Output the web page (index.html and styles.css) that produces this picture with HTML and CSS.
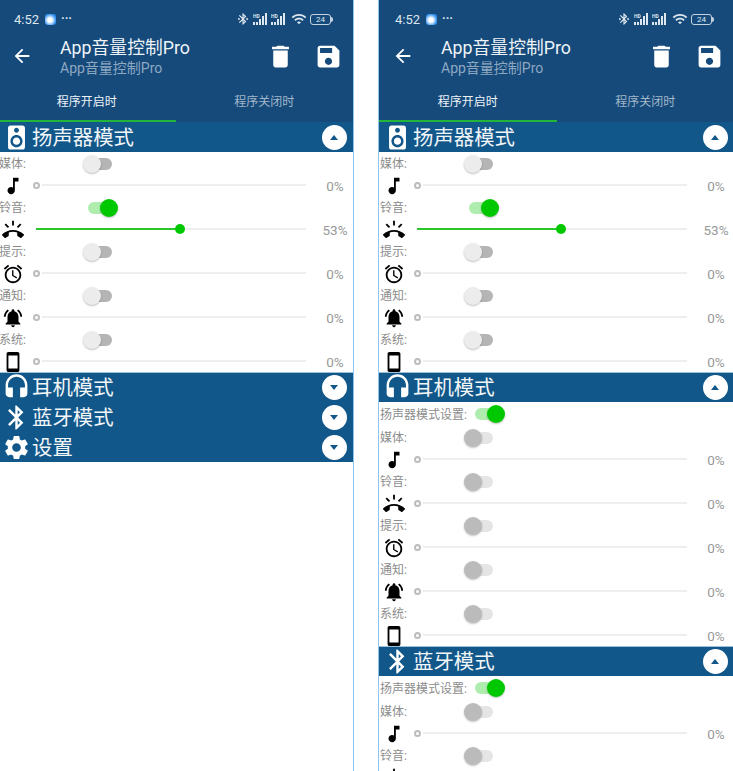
FILE: index.html
```html
<!DOCTYPE html>
<html lang="zh-CN">
<head>
    <meta charset="UTF-8">
    <meta name="viewport" content="width=device-width, initial-scale=1.0">
    <title>App音量控制Pro</title>
    <link rel="stylesheet" href="styles.css">
</head>
<body>
    <svg class="sprites" xmlns="http://www.w3.org/2000/svg">
        <symbol id="i-back" viewBox="0 0 24 24"><path d="M20 11H7.83l5.59-5.59L12 4l-8 8 8 8 1.41-1.41L7.83 13H20v-2z"/></symbol>
        <symbol id="i-delete" viewBox="0 0 24 24"><path d="M6 19c0 1.1.9 2 2 2h8c1.1 0 2-.9 2-2V7H6v12zM19 4h-3.5l-1-1h-5l-1 1H5v2h14V4z"/></symbol>
        <symbol id="i-save" viewBox="0 0 24 24"><path d="M17 3H5c-1.11 0-2 .9-2 2v14c0 1.1.89 2 2 2h14c1.1 0 2-.9 2-2V7l-4-4zm-5 16c-1.66 0-3-1.34-3-3s1.34-3 3-3 3 1.34 3 3-1.34 3-3 3zm3-10H5V5h10v4z"/></symbol>
        <symbol id="i-note" viewBox="0 0 24 24"><path d="M12 3v10.55c-.59-.34-1.27-.55-2-.55-2.21 0-4 1.79-4 4s1.79 4 4 4 4-1.79 4-4V7h4V3h-6z"/></symbol>
        <symbol id="i-ring" viewBox="0 0 24 24"><path d="M23.71 16.67C20.66 13.78 16.54 12 12 12 7.46 12 3.34 13.78.29 16.67c-.18.18-.29.43-.29.71 0 .28.11.53.29.71l2.48 2.48c.18.18.43.29.71.29.27 0 .52-.11.7-.28.79-.74 1.69-1.36 2.66-1.85.33-.16.56-.5.56-.9v-3.1c1.45-.48 3-.73 4.6-.73s3.15.25 4.6.72v3.1c0 .39.23.74.56.9.98.49 1.87 1.12 2.66 1.85.18.18.43.28.7.28.28 0 .53-.11.71-.29l2.48-2.48c.18-.18.29-.43.29-.71 0-.27-.11-.52-.29-.7zM21.16 6.26l-1.41-1.41-3.56 3.55 1.41 1.41s3.45-3.52 3.56-3.55zM13 2h-2v5h2V2zM6.4 9.81L7.81 8.4 4.26 4.84 2.84 6.26c.11.03 3.56 3.55 3.56 3.55z"/></symbol>
        <symbol id="i-alarm" viewBox="0 0 24 24"><path d="M22 5.72l-4.6-3.86-1.29 1.53 4.6 3.86L22 5.72zM7.88 3.39L6.6 1.86 2 5.71l1.29 1.53 4.59-3.85zM12.5 8H11v6l4.75 2.85.75-1.23-4-2.37V8zM12 4c-4.97 0-9 4.03-9 9s4.02 9 9 9c4.97 0 9-4.03 9-9s-4.03-9-9-9zm0 16c-3.87 0-7-3.13-7-7s3.13-7 7-7 7 3.13 7 7-3.13 7-7 7z"/></symbol>
        <symbol id="i-bell" viewBox="0 0 24 24"><path d="M7.58 4.08L6.15 2.65C3.75 4.48 2.17 7.3 2.03 10.5h2c.15-2.65 1.51-4.97 3.55-6.42zm12.39 6.42h2c-.15-3.2-1.73-6.02-4.12-7.85l-1.42 1.43c2.02 1.45 3.39 3.77 3.54 6.42zM18 11c0-3.07-1.64-5.64-4.5-6.32V4c0-.83-.67-1.5-1.5-1.5s-1.5.67-1.5 1.5v.68C7.63 5.36 6 7.92 6 11v5l-2 2v1h16v-1l-2-2v-5zm-6 11c.14 0 .27-.01.4-.04.65-.14 1.18-.58 1.44-1.18.1-.24.15-.5.15-.78h-4c.01 1.1.9 2 2.01 2z"/></symbol>
        <symbol id="i-phone" viewBox="0 0 24 24"><path d="M17 1.01L7 1c-1.1 0-2 .9-2 2v18c0 1.1.9 2 2 2h10c1.1 0 2-.9 2-2V3c0-1.1-.9-1.99-2-1.99zM17 19H7V5h10v14z"/></symbol>
        <symbol id="i-speaker" viewBox="0 0 24 24"><path d="M17 2H7c-1.1 0-2 .9-2 2v16c0 1.1.9 1.99 2 1.99L17 22c1.1 0 2-.9 2-2V4c0-1.1-.9-2-2-2zm-5 2c1.1 0 2 .9 2 2s-.9 2-2 2c-1.11 0-2-.9-2-2s.89-2 2-2zm0 16c-2.76 0-5-2.24-5-5s2.24-5 5-5 5 2.24 5 5-2.24 5-5 5zm0-8c-1.66 0-3 1.34-3 3s1.34 3 3 3 3-1.34 3-3-1.34-3-3-3z"/></symbol>
        <symbol id="i-headset" viewBox="0 0 24 24"><path d="M12 1c-4.97 0-9 4.03-9 9v7c0 1.66 1.34 3 3 3h3v-8H5v-2c0-3.87 3.13-7 7-7s7 3.13 7 7v2h-4v8h3c1.66 0 3-1.34 3-3v-7c0-4.97-4.03-9-9-9z"/></symbol>
        <symbol id="i-bluetooth" viewBox="0 0 24 24"><path d="M17.71 7.71L12 2h-1v7.59L6.41 5 5 6.41 10.59 12 5 17.59 6.41 19 11 14.41V22h1l5.71-5.71-4.3-4.29 4.3-4.29zM13 5.83l1.88 1.88L13 9.59V5.83zm1.88 10.46L13 18.17v-3.76l1.88 1.88z"/></symbol>
        <symbol id="i-bt-connected" viewBox="0 0 24 24"><path d="M7 12l-2-2-2 2 2 2 2-2zm10.710-4.290L12 2h-1v7.590L6.410 5 5 6.410 10.590 12 5 17.590 6.410 19 11 14.410V22h1l5.710-5.710-4.300-4.290 4.300-4.290zM13 5.830l1.880 1.880L13 9.590V5.830zm1.880 10.460L13 18.170v-3.760l1.880 1.880zM19 10l-2 2 2 2 2-2-2-2z"/></symbol>
        <symbol id="i-settings" viewBox="0 0 24 24"><path d="M19.14 12.94c.04-.3.06-.61.06-.94 0-.32-.02-.64-.07-.94l2.03-1.58c.18-.14.23-.41.12-.61l-1.92-3.32c-.12-.22-.37-.29-.59-.22l-2.39.96c-.5-.38-1.03-.7-1.62-.94l-.36-2.54c-.04-.24-.24-.41-.48-.41h-3.84c-.24 0-.43.17-.47.41l-.36 2.54c-.59.24-1.13.57-1.62.94l-2.39-.96c-.22-.08-.47 0-.59.22L2.74 8.87c-.12.21-.08.47.12.61l2.03 1.58c-.05.3-.09.63-.09.94s.02.64.07.94l-2.03 1.58c-.18.14-.23.41-.12.61l1.92 3.32c.12.22.37.29.59.22l2.39-.96c.5.38 1.03.7 1.62.94l.36 2.54c.05.24.24.41.48.41h3.84c.24 0 .44-.17.47-.41l.36-2.54c.59-.24 1.13-.56 1.62-.94l2.39.96c.22.08.47 0 .59-.22l1.92-3.32c.12-.22.07-.47-.12-.61l-2.01-1.58zM12 15.6c-1.98 0-3.6-1.62-3.6-3.6s1.62-3.6 3.6-3.6 3.6 1.62 3.6 3.6-1.62 3.6-3.6 3.6z"/></symbol>
        <symbol id="i-wifi" viewBox="0 0 24 24"><path d="M1 9l2 2c5-5 13-5 18 0l2-2C17 3 7 3 1 9zm4 4l2 2c2.8-2.8 7.2-2.8 10 0l2-2c-3.9-3.9-10.100-3.900-14 0zm4 4l3 3 3-3c-1.700-1.600-4.300-1.600-6 0z"/></symbol>
        <symbol id="i-signal" viewBox="0 0 16 12">
            <rect x="0" y="9" width="2" height="3"/><rect x="3" y="9" width="2" height="3"/><rect x="6" y="6" width="2" height="6"/>
            <rect x="9" y="3" width="2" height="9"/><rect x="12" y="0" width="2" height="12"/>
            <text x="0" y="5" class="hd">HD</text>
        </symbol>
    </svg>

    <div class="phone first">
        <div class="topbar">
            <div class="status">
                <span class="time">4:52</span>
                <span class="app-dot"></span>
                <span class="more">···</span>
                <div class="status-icons">
                    <svg class="st-bt"><use href="#i-bt-connected"/></svg>
                    <svg class="st-signal"><use href="#i-signal"/></svg>
                    <svg class="st-signal"><use href="#i-signal"/></svg>
                    <svg class="st-wifi"><use href="#i-wifi"/></svg>
                    <span class="battery">24</span>
                </div>
            </div>
            <div class="toolbar">
                <svg class="tool-back"><use href="#i-back"/></svg>
                <div class="titles">
                    <div class="title">App音量控制Pro</div>
                    <div class="subtitle">App音量控制Pro</div>
                </div>
                <svg class="tool-btn"><use href="#i-delete"/></svg>
                <svg class="tool-btn"><use href="#i-save"/></svg>
            </div>
            <div class="tabs">
                <div class="tab active">程序开启时</div>
                <div class="tab">程序关闭时</div>
            </div>
        </div>

        <div class="section-head">
            <svg class="head-icon"><use href="#i-speaker"/></svg>
            <span>扬声器模式</span>
            <span class="chevron up"></span>
        </div>
        <div class="row"><label>媒体:</label><span class="switch off"></span></div>
        <div class="row"><svg class="row-icon"><use href="#i-note"/></svg><div class="slider"><i class="ring"></i></div><span class="pct">0%</span></div>
        <div class="row"><label>铃音:</label><span class="switch on"></span></div>
        <div class="row"><svg class="row-icon"><use href="#i-ring"/></svg><div class="slider"><b class="fill" style="width: 53%"></b></div><span class="pct">53%</span></div>
        <div class="row"><label>提示:</label><span class="switch off"></span></div>
        <div class="row"><svg class="row-icon"><use href="#i-alarm"/></svg><div class="slider"><i class="ring"></i></div><span class="pct">0%</span></div>
        <div class="row"><label>通知:</label><span class="switch off"></span></div>
        <div class="row"><svg class="row-icon"><use href="#i-bell"/></svg><div class="slider"><i class="ring"></i></div><span class="pct">0%</span></div>
        <div class="row"><label>系统:</label><span class="switch off"></span></div>
        <div class="row"><svg class="row-icon"><use href="#i-phone"/></svg><div class="slider"><i class="ring"></i></div><span class="pct">0%</span></div>

        <div class="section-head">
            <svg class="head-icon"><use href="#i-headset"/></svg>
            <span>耳机模式</span>
            <span class="chevron down"></span>
        </div>
        <div class="section-head">
            <svg class="head-icon"><use href="#i-bluetooth"/></svg>
            <span>蓝牙模式</span>
            <span class="chevron down"></span>
        </div>
        <div class="section-head">
            <svg class="head-icon"><use href="#i-settings"/></svg>
            <span>设置</span>
            <span class="chevron down"></span>
        </div>
    </div>

    <div class="phone">
        <div class="topbar">
            <div class="status">
                <span class="time">4:52</span>
                <span class="app-dot"></span>
                <span class="more">···</span>
                <div class="status-icons">
                    <svg class="st-bt"><use href="#i-bt-connected"/></svg>
                    <svg class="st-signal"><use href="#i-signal"/></svg>
                    <svg class="st-signal"><use href="#i-signal"/></svg>
                    <svg class="st-wifi"><use href="#i-wifi"/></svg>
                    <span class="battery">24</span>
                </div>
            </div>
            <div class="toolbar">
                <svg class="tool-back"><use href="#i-back"/></svg>
                <div class="titles">
                    <div class="title">App音量控制Pro</div>
                    <div class="subtitle">App音量控制Pro</div>
                </div>
                <svg class="tool-btn"><use href="#i-delete"/></svg>
                <svg class="tool-btn"><use href="#i-save"/></svg>
            </div>
            <div class="tabs">
                <div class="tab active">程序开启时</div>
                <div class="tab">程序关闭时</div>
            </div>
        </div>

        <div class="section-head">
            <svg class="head-icon"><use href="#i-speaker"/></svg>
            <span>扬声器模式</span>
            <span class="chevron up"></span>
        </div>
        <div class="row"><label>媒体:</label><span class="switch off"></span></div>
        <div class="row"><svg class="row-icon"><use href="#i-note"/></svg><div class="slider"><i class="ring"></i></div><span class="pct">0%</span></div>
        <div class="row"><label>铃音:</label><span class="switch on"></span></div>
        <div class="row"><svg class="row-icon"><use href="#i-ring"/></svg><div class="slider"><b class="fill" style="width: 53%"></b></div><span class="pct">53%</span></div>
        <div class="row"><label>提示:</label><span class="switch off"></span></div>
        <div class="row"><svg class="row-icon"><use href="#i-alarm"/></svg><div class="slider"><i class="ring"></i></div><span class="pct">0%</span></div>
        <div class="row"><label>通知:</label><span class="switch off"></span></div>
        <div class="row"><svg class="row-icon"><use href="#i-bell"/></svg><div class="slider"><i class="ring"></i></div><span class="pct">0%</span></div>
        <div class="row"><label>系统:</label><span class="switch off"></span></div>
        <div class="row"><svg class="row-icon"><use href="#i-phone"/></svg><div class="slider"><i class="ring"></i></div><span class="pct">0%</span></div>

        <div class="section-head">
            <svg class="head-icon"><use href="#i-headset"/></svg>
            <span>耳机模式</span>
            <span class="chevron up"></span>
        </div>
        <div class="row setting"><label>扬声器模式设置:</label><span class="switch on"></span></div>
        <div class="row"><label>媒体:</label><span class="switch disabled"></span></div>
        <div class="row"><svg class="row-icon"><use href="#i-note"/></svg><div class="slider"><i class="ring"></i></div><span class="pct">0%</span></div>
        <div class="row"><label>铃音:</label><span class="switch disabled"></span></div>
        <div class="row"><svg class="row-icon"><use href="#i-ring"/></svg><div class="slider"><i class="ring"></i></div><span class="pct">0%</span></div>
        <div class="row"><label>提示:</label><span class="switch disabled"></span></div>
        <div class="row"><svg class="row-icon"><use href="#i-alarm"/></svg><div class="slider"><i class="ring"></i></div><span class="pct">0%</span></div>
        <div class="row"><label>通知:</label><span class="switch disabled"></span></div>
        <div class="row"><svg class="row-icon"><use href="#i-bell"/></svg><div class="slider"><i class="ring"></i></div><span class="pct">0%</span></div>
        <div class="row"><label>系统:</label><span class="switch disabled"></span></div>
        <div class="row"><svg class="row-icon"><use href="#i-phone"/></svg><div class="slider"><i class="ring"></i></div><span class="pct">0%</span></div>

        <div class="section-head">
            <svg class="head-icon"><use href="#i-bluetooth"/></svg>
            <span>蓝牙模式</span>
            <span class="chevron up"></span>
        </div>
        <div class="row setting"><label>扬声器模式设置:</label><span class="switch on"></span></div>
        <div class="row"><label>媒体:</label><span class="switch disabled"></span></div>
        <div class="row"><svg class="row-icon"><use href="#i-note"/></svg><div class="slider"><i class="ring"></i></div><span class="pct">0%</span></div>
        <div class="row"><label>铃音:</label><span class="switch disabled"></span></div>
        <div class="row"><svg class="row-icon"><use href="#i-ring"/></svg></div>
    </div>
</body>
</html>
```

FILE: styles.css
```css
html, body {
    height: 100%;
    margin: 0;
    overflow: hidden;
}

body {
    display: flex;
    gap: 24px;
    background: #ffffff;
    font-family: Roboto, "Noto Sans CJK SC", sans-serif;
    color: #8c8c8c;
}

.sprites {
    display: none;
}

.hd {
    font-family: Roboto, sans-serif;
    font-size: 5px;
    font-weight: 700;
}

.phone {
    flex: none;
    width: 355px;
    height: 771px;
    overflow: hidden;
    background: #ffffff;
    border-left: 1px solid #8ec5f0;
    border-right: 1px solid #8ec5f0;
}

.first {
    margin-left: -3px;
}

.topbar {
    background: #154a7b;
    color: #ffffff;
}

.status {
    display: flex;
    align-items: center;
    height: 30px;
    padding: 8px 22px 0 16px;
    box-sizing: border-box;
    fill: #dfe7ee;
}

.time {
    font-size: 13px;
    color: #dfe7ee;
}

.app-dot {
    width: 11px;
    height: 11px;
    margin-left: 6px;
    border-radius: 3px;
    background: radial-gradient(circle at 45% 55%, #ffffff 25%, #2f8ff0 70%);
}

.more {
    margin-left: 5px;
    font-size: 12px;
    font-weight: 700;
    color: #dfe7ee;
}

.status-icons {
    display: flex;
    align-items: center;
    margin-left: auto;
}

.st-bt {
    width: 14px;
    height: 14px;
    margin-right: 3px;
}

.st-signal {
    width: 16px;
    height: 12px;
    margin-right: 2px;
}

.st-wifi {
    width: 16px;
    height: 16px;
    margin: 0 3px 0 2px;
}

.battery {
    position: relative;
    width: 19px;
    height: 9px;
    border: 1px solid #c4d2df;
    border-radius: 3px;
    font-size: 8px;
    line-height: 9px;
    text-align: center;
    color: #dfe7ee;
}

.battery::after {
    content: "";
    position: absolute;
    top: 2px;
    right: -3px;
    width: 2px;
    height: 5px;
    border-radius: 0 2px 2px 0;
    background: #c4d2df;
}

.toolbar {
    display: flex;
    align-items: center;
    height: 54px;
    fill: #ffffff;
}

.tool-back {
    width: 22px;
    height: 22px;
    margin: 0 0 2px 13px;
}

.titles {
    flex: 1;
    margin-left: 27px;
}

.title {
    font-size: 17.8px;
    line-height: 22px;
    color: #eef3f7;
}

.subtitle {
    font-size: 14px;
    line-height: 18px;
    color: #8ea8c2;
}

.tool-btn {
    width: 29px;
    height: 29px;
    margin: 0 19px 2px 0;
}

.tool-btn:last-child {
    margin-right: 10px;
}

.tabs {
    display: flex;
    height: 38px;
}

.tab {
    flex: 1;
    padding-top: 8px;
    box-sizing: border-box;
    font-size: 12px;
    line-height: 20px;
    text-align: center;
    color: #a3b7ca;
}

.tab.active {
    color: #eef3f7;
    border-bottom: 2px solid #22b53a;
}

.section-head {
    display: flex;
    align-items: center;
    height: 30px;
    box-sizing: border-box;
    background: #11578a;
    border-top: 1px solid #9cc0da;
    color: #f2f6f9;
    fill: #ffffff;
    font-size: 20.4px;
}

.topbar + .section-head,
.section-head + .section-head {
    border-top-color: #11578a;
}

.section-head span:first-of-type {
    padding-bottom: 4px;
}

.head-icon {
    flex: none;
    width: 29px;
    height: 29px;
    margin: 0 1px 0 4px;
}

.section-head .chevron {
    position: relative;
    width: 25px;
    height: 25px;
    padding: 0;
    margin-left: auto;
    margin-right: 6px;
    border-radius: 50%;
    background: #ffffff;
}

.chevron::after {
    content: "";
    position: absolute;
    left: 8px;
    border-left: 4.5px solid transparent;
    border-right: 4.5px solid transparent;
}

.chevron.up::after {
    top: 10px;
    border-bottom: 5px solid #11578a;
}

.chevron.down::after {
    top: 10px;
    border-top: 5px solid #11578a;
}

.row {
    display: flex;
    align-items: center;
    height: 22px;
}

.row.setting {
    height: 24px;
}

.row label {
    flex: none;
    width: 28px;
    padding: 0 0 2px 1px;
    font-size: 12px;
    white-space: nowrap;
}

.row.setting label {
    width: 89px;
}

.row-icon {
    flex: none;
    width: 22px;
    height: 22px;
    margin: 2px 0 0 3.5px;
    fill: #000000;
}

.slider {
    position: relative;
    flex: none;
    width: 270px;
    height: 2px;
    margin-left: 12.5px;
    background: #eeeeee;
}

.fill {
    position: absolute;
    top: 0;
    left: 0;
    height: 2px;
    background: #2bc62b;
}

.fill::after {
    content: "";
    position: absolute;
    top: -4px;
    right: -6px;
    width: 10px;
    height: 10px;
    border-radius: 50%;
    background: #00c800;
}

.ring {
    position: absolute;
    top: -2.5px;
    left: -3px;
    width: 3px;
    height: 3px;
    border: 2px solid #bdbdbd;
    border-radius: 50%;
    background: #ffffff;
    box-shadow: 0 0 0 2px #ffffff;
}

.pct {
    flex: none;
    width: 38px;
    padding-top: 2px;
    margin-left: 10px;
    font-size: 13.5px;
    line-height: 14px;
    text-align: center;
    color: #999999;
}

.switch {
    position: relative;
    flex: none;
    width: 24px;
    height: 12px;
    margin: 1px 0 0 61px;
    border-radius: 6px;
    background: #b5b5b5;
}

.row.setting .switch {
    margin: 0 0 0 6px;
}

.switch::after {
    content: "";
    position: absolute;
    top: -3px;
    left: -5px;
    width: 18px;
    height: 18px;
    border-radius: 50%;
    background: #ececec;
    box-shadow: 0 1px 2px rgba(0, 0, 0, 0.25);
}

.switch.on {
    background: #aeedae;
}

.switch.on::after {
    left: 12px;
    background: #00c800;
}

.switch.disabled {
    background: #e5e5e5;
}

.switch.disabled::after {
    background: #bbbbbb;
}
```
